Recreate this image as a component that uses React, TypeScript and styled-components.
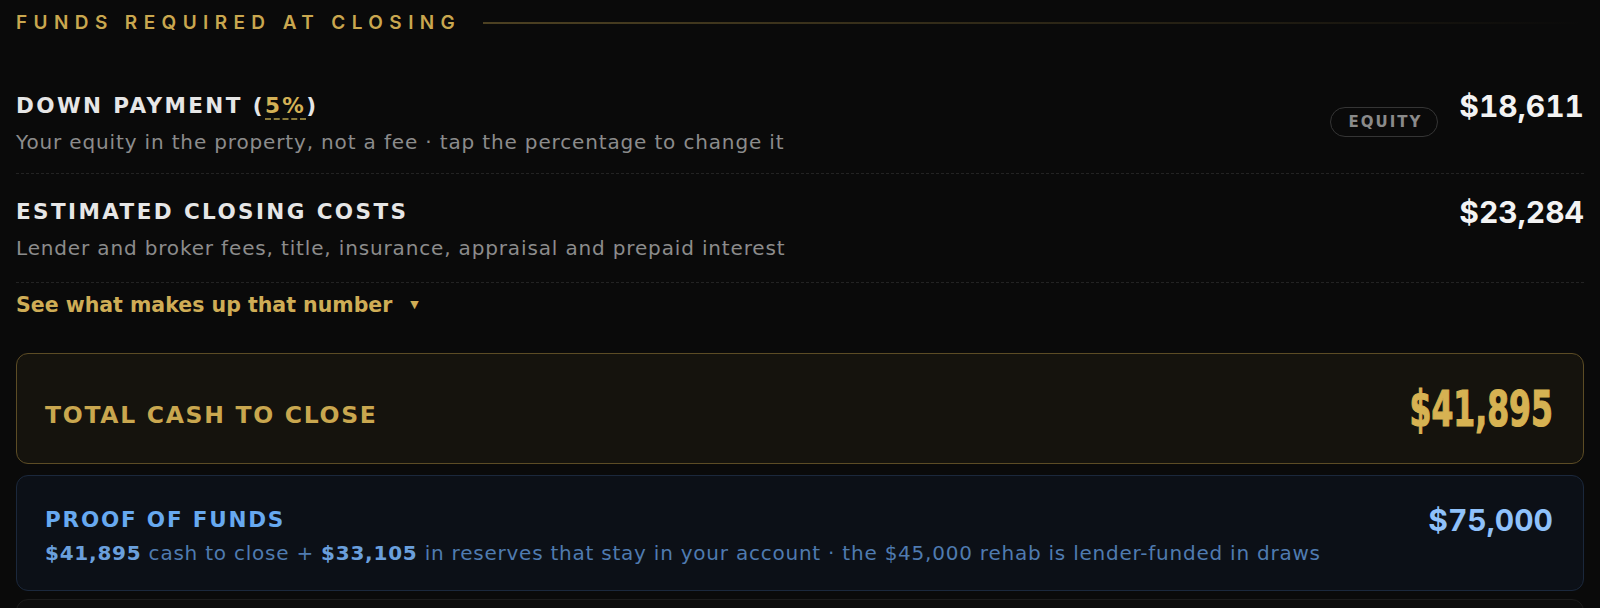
import styled, { createGlobalStyle } from "styled-components";

const GlobalStyle = createGlobalStyle`
  html, body {
    margin: 0;
    padding: 0;
    background: #0a0a0a;
    font-family: "DejaVu Sans", Verdana, sans-serif;
    overflow: hidden;
  }
`;

type Row = {
  title: React.ReactNode;
  note: string;
  amount: string;
  tag?: string;
};

function getRows(): Row[] {
  return [
    {
      title: (
        <>
          DOWN PAYMENT (<Percent>5%</Percent>)
        </>
      ),
      note: "Your equity in the property, not a fee · tap the percentage to change it",
      amount: "$18,611",
      tag: "EQUITY",
    },
    {
      title: "ESTIMATED CLOSING COSTS",
      note: "Lender and broker fees, title, insurance, appraisal and prepaid interest",
      amount: "$23,284",
    },
  ];
}

export default function App() {
  const rows = getRows();
  return (
    <>
      <GlobalStyle />
      <Page>
        <Heading>
          <HeadingText>Funds required at closing</HeadingText>
          <HeadingRule />
        </Heading>

        {rows.map((row, index) => (
          <LineItem key={index}>
            <ItemText>
              <ItemTitle>{row.title}</ItemTitle>
              <ItemNote>{row.note}</ItemNote>
            </ItemText>
            <ItemRight>
              {row.tag && <Tag>{row.tag}</Tag>}
              <ItemAmount>{row.amount}</ItemAmount>
            </ItemRight>
          </LineItem>
        ))}

        <Toggle>
          See what makes up that number<Caret>▼</Caret>
        </Toggle>

        <TotalCard>
          <TotalLabel>Total cash to close</TotalLabel>
          <TotalAmount>$41,895</TotalAmount>
        </TotalCard>

        <ProofCard>
          <ProofText>
            <ProofTitle>Proof of funds</ProofTitle>
            <ProofNote>
              <strong>$41,895</strong> cash to close + <strong>$33,105</strong> in
              reserves that stay in your account · the $45,000 rehab is
              lender-funded in draws
            </ProofNote>
          </ProofText>
          <ProofAmount>$75,000</ProofAmount>
        </ProofCard>

        <NextCard />
      </Page>
    </>
  );
}

const Page = styled.div`
  padding: 6px 16px 0 16px;
  display: flex;
  flex-direction: column;
`;

const Heading = styled.div`
  display: flex;
  align-items: center;
  gap: 22px;
  height: 33px;
  margin-bottom: 27px;
`;

const HeadingText = styled.h2`
  margin: 0;
  font-family: Inter, "Noto Sans", sans-serif;
  font-size: 19px;
  font-weight: 600;
  letter-spacing: 6.4px;
  text-transform: uppercase;
  color: #c9a74f;
  white-space: nowrap;
`;

const HeadingRule = styled.div`
  flex: 1;
  height: 2px;
  background: linear-gradient(
    90deg,
    rgba(201, 167, 79, 0.35) 0%,
    rgba(201, 167, 79, 0.12) 70%,
    rgba(201, 167, 79, 0) 100%
  );
`;

const LineItem = styled.div`
  display: flex;
  justify-content: space-between;
  align-items: flex-start;
  padding: 26px 0 17px;
  border-bottom: 1px dashed #232323;

  & + & {
    padding-top: 24px;
    padding-bottom: 20px;
  }
`;

const ItemText = styled.div`
  display: flex;
  flex-direction: column;
  gap: 8px;
`;

const ItemTitle = styled.div`
  font-size: 21.5px;
  line-height: 28px;
  font-weight: 700;
  letter-spacing: 2.4px;
  color: #e6e6e6;
`;

const Percent = styled.span`
  color: #d4b156;
  border-bottom: 2px dashed #8a7a3a;
`;

const ItemNote = styled.div`
  font-size: 20px;
  line-height: 28px;
  letter-spacing: 0.85px;
  color: #8c8c8c;
`;

const ItemRight = styled.div`
  display: flex;
  align-items: flex-start;
  gap: 21px;
`;

const Tag = styled.span`
  margin-top: 15px;
  height: 30px;
  box-sizing: border-box;
  padding: 0 15px 0 17px;
  display: inline-flex;
  align-items: center;
  border: 1.5px solid #353535;
  border-radius: 15px;
  font-size: 15px;
  font-weight: 700;
  letter-spacing: 2px;
  color: #8a8a8a;
`;

const Amount = styled.div`
  font-family: Inter, "Noto Sans", sans-serif;
  font-variant-numeric: tabular-nums;
  font-size: 30px;
  line-height: 34px;
  font-weight: 700;
`;

const ItemAmount = styled(Amount)`
  margin-top: -3px;
  color: #f3f3f3;
`;

const Toggle = styled.div`
  padding-top: 9px;
  font-size: 20.5px;
  line-height: 26px;
  font-weight: 700;
  color: #cfad56;
  margin-bottom: 35px;
`;

const Caret = styled.span`
  font-size: 11px;
  margin-left: 18px;
  vertical-align: 4px;
`;

const Card = styled.div`
  display: flex;
  justify-content: space-between;
  box-sizing: border-box;
  border-radius: 12px;
  padding: 0 30px 0 28px;
`;

const TotalCard = styled(Card)`
  height: 111px;
  align-items: center;
  background: #15130d;
  border: 1.5px solid #5c4c25;
`;

const TotalLabel = styled.div`
  margin-top: 12px;
  font-size: 23.5px;
  font-weight: 700;
  letter-spacing: 1.7px;
  text-transform: uppercase;
  color: #c9a74f;
`;

const TotalAmount = styled.div`
  font-family: "DejaVu Sans Condensed", "DejaVu Sans", sans-serif;
  font-size: 50px;
  line-height: 56px;
  font-weight: 700;
  color: #d6b252;
  -webkit-text-stroke: 1.2px #d6b252;
  transform: scaleX(0.7);
  transform-origin: right center;
`;

const ProofCard = styled(Card)`
  margin-top: 11px;
  height: 116px;
  padding-top: 30px;
  align-items: flex-start;
  background: #0c1017;
  border: 1.5px solid #1b283c;
`;

const ProofText = styled.div`
  display: flex;
  flex-direction: column;
  gap: 5px;
`;

const ProofTitle = styled.div`
  font-size: 21.5px;
  line-height: 28px;
  font-weight: 700;
  letter-spacing: 1.8px;
  text-transform: uppercase;
  color: #67a9f0;
`;

const ProofNote = styled.div`
  font-size: 20px;
  line-height: 28px;
  letter-spacing: 0.77px;
  color: #4f7bb0;

  strong {
    color: #6a9fdc;
    font-weight: 700;
  }
`;

const ProofAmount = styled(Amount)`
  margin-top: -3px;
  color: #8fc1fa;
`;

const NextCard = styled.div`
  margin-top: 8px;
  height: 80px;
  border-radius: 12px;
  border: 1.5px solid #1c1c1c;
  background: #0d0d0d;
`;
